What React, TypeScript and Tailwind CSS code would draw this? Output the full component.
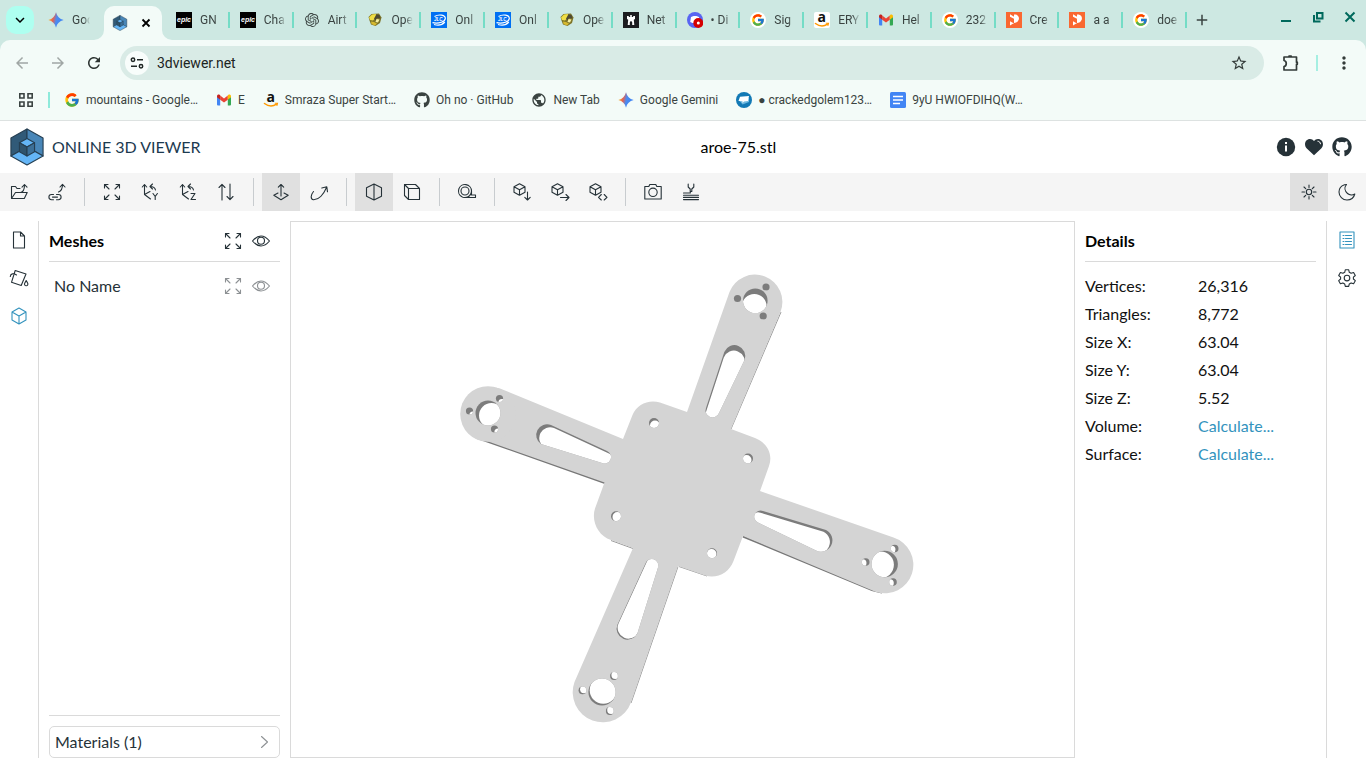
import React, { useId } from "react";
import type { ReactNode } from "react";
import { FcGoogle } from "react-icons/fc";
import { FaGithub } from "react-icons/fa";
import { SiOpenai } from "react-icons/si";
import {
  MdArrowBack,
  MdArrowForward,
  MdRefresh,
  MdStarBorder,
  MdMoreVert,
  MdAdd,
  MdExpandMore,
  MdPublic,
} from "react-icons/md";

/* ---------- favicons ---------- */

function Gemini() {
  const id = useId();
  return (
    <svg viewBox="0 0 16 16" className="size-4 shrink-0" aria-hidden="true">
      <defs>
        <linearGradient id={id} x1="0" y1="0.4" x2="1" y2="0.6">
          <stop offset="0" stopColor="#f6c02d" />
          <stop offset="0.3" stopColor="#e8604f" />
          <stop offset="0.52" stopColor="#4b8bf0" />
          <stop offset="1" stopColor="#3b82f6" />
        </linearGradient>
      </defs>
      <path fill={`url(#${id})`} d="M8 .3C9 4.500 11.500 7 15.700 8 11.500 9 9 11.500 8 15.700 7 11.500 4.500 9 .3 8 4.500 7 7 4.500 8 .3Z" />
    </svg>
  );
}

function ViewerLogo({ className }: { className: string }) {
  return (
    <svg viewBox="0 0 36 40" className={className} aria-hidden="true" stroke="#263f52" strokeWidth="1.200" strokeLinejoin="round">
      <path fill="#315a78" d="M1 10.500 18 1v19L1 29.500Z" />
      <path fill="#4886b8" d="M35 10.500 18 1v19l17 9.500Z" />
      <path fill="#64b5f6" d="M1 29.500 18 20l17 9.500L18 39Z" />
      <path fill="#64b5f6" d="M10 15.500 18 11l8 4.500-8 4.500Z" />
      <path fill="#2f536c" d="M10 15.500 18 20v9.500L10 25Z" />
      <path fill="#3c6f97" d="M26 15.500 18 20v9.500l8-4.500Z" />
    </svg>
  );
}

function Epic() {
  return (
    <svg viewBox="0 0 16 16" className="size-4 shrink-0" aria-hidden="true">
      <rect width="16" height="16" fill="#000" />
      <text x="8" y="10" textAnchor="middle" fill="#fff" fontSize="7" fontWeight="700" fontStyle="italic" fontFamily="Liberation Sans">epic</text>
    </svg>
  );
}

function Opening() {
  return (
    <svg viewBox="0 0 16 16" className="size-4 shrink-0" aria-hidden="true">
      <path fill="#7d7428" d="m1.500 5 3-3L12 1.500l2.500 4L13 11l-4.500 3L4 12.500 2.500 8.500Z" />
      <path fill="#f0de45" d="M2 5.500 5 2.500l4-.500-.5 4L6 8.500 3 8Z" />
      <path fill="#4f4a33" d="m9.500 2.500 3 .5 1 3.500-3.500-.5-1.500 2.500-1.500-2Z" />
      <path fill="#f8f0a0" d="m9.500 7 3 .5-1.500 3-2.500-.5Z" />
      <path fill="#d6b92e" d="m4 9.500 3 .5 3 1.500-2 2-3.500-1.500Z" />
    </svg>
  );
}

function Jlc() {
  return (
    <svg viewBox="0 0 16 16" className="size-4 shrink-0" aria-hidden="true">
      <rect width="16" height="16" fill="#0070f3" />
      <path fill="none" stroke="#fff" strokeWidth="1.200" d="M3.500 4.500C8 1.800 14.500 3 14.300 6.500c-.2 3-6 5.500-12.800 4.200M3 12.500c4.500 1.200 8.500.3 10.800-2.500" />
      <text x="7.300" y="9" textAnchor="middle" fill="#fff" fontSize="4.500" fontWeight="700" fontStyle="italic" fontFamily="Liberation Sans">JLC</text>
    </svg>
  );
}

function Rook() {
  return (
    <svg viewBox="0 0 16 16" className="size-4 shrink-0" aria-hidden="true">
      <rect width="16" height="16" fill="#1c1d20" />
      <path fill="#fff" d="M4 4h1.800v1h1.400V3h1.600v2h1.400V4H12v3l-1.200.7.5 5.300H9.200v-2.500a1.200 1.200 0 0 0-2.400 0V13H4.700l.5-5.300L4 7Z" />
    </svg>
  );
}

function Discord() {
  return (
    <svg viewBox="0 0 16 16" className="size-4 shrink-0" aria-hidden="true">
      <circle cx="8" cy="8" r="8" fill="#5865f2" />
      <path fill="#fff" d="M4 5c2-1.500 6-1.500 8 0l.8 5-2.300 1H5.500l-2.300-1Z" />
      <circle cx="11.300" cy="11" r="5" fill="#d50000" />
      <circle cx="11.300" cy="11" r="1.500" fill="#fff" />
    </svg>
  );
}

function GoogleTile() {
  return (
    <span className="flex size-4 shrink-0 items-center justify-center rounded-full bg-white">
      <FcGoogle className="size-3.5" />
    </span>
  );
}

function Amazon({ tile = false }: { tile?: boolean }) {
  return (
    <svg viewBox="0 0 16 16" className="size-4 shrink-0" aria-hidden="true">
      {tile && <rect width="16" height="16" rx="2" fill="#fff" />}
      <text x="7.800" y="10" textAnchor="middle" fill="#111" fontSize="14" fontWeight="700" fontFamily="Open Sans">a</text>
      <path fill="none" stroke="#f90" strokeWidth="1.500" strokeLinecap="round" d="M1.500 11.500c4 3 8.500 3 12 .6" />
      <path fill="none" stroke="#f90" strokeWidth="1.100" d="M11.800 11.200h2.700l-.7 2.600" />
    </svg>
  );
}

function Gmail() {
  return (
    <svg viewBox="0 0 16 16" className="size-4 shrink-0" aria-hidden="true">
      <path fill="#4285f4" d="M1 4.500 4.200 7v6.500H2a1 1 0 0 1-1-1Z" />
      <path fill="#34a853" d="M15 4.500 11.800 7v6.500H14a1 1 0 0 0 1-1Z" />
      <path fill="#ea4335" d="M4.200 3.500 8 6.400l3.800-2.900v4.200L8 10.600 4.200 7.700Z" />
      <path fill="#c5221f" d="M1 4.200c0-1.600 1.800-2.100 2.800-1.300l.4.400v4.400L1 5.300Z" />
      <path fill="#fbbc04" d="M15 4.200c0-1.600-1.800-2.100-2.800-1.300l-.4.400v4.400L15 5.300Z" />
    </svg>
  );
}

function Printables() {
  return (
    <svg viewBox="0 0 16 16" className="size-4 shrink-0" aria-hidden="true">
      <rect width="16" height="16" fill="#fa6831" />
      <path fill="#fff" d="M4 2.300 8 4.700V2.500c4-.3 5.500 2.500 4.800 5C12 10 10 11 8 11l-4 2.500V9.300L8 11.500V6.800L4 4.800Z" />
    </svg>
  );
}

function BlueBadge() {
  return (
    <svg viewBox="0 0 16 16" className="size-4 shrink-0" aria-hidden="true">
      <circle cx="8" cy="8" r="8" fill="#1279b5" />
      <path fill="#6db8df" d="m3 8 3.500 4.500L13 10V6Z" />
      <path fill="#fff" d="M4 4.800 13 4l-1 5-4 .5L6.500 11V9.300L2.500 9Z" />
    </svg>
  );
}

function Docs() {
  return (
    <svg viewBox="0 0 16 16" className="size-4 shrink-0" aria-hidden="true">
      <rect width="16" height="16" rx="1.500" fill="#4285f4" />
      <path stroke="#fff" strokeWidth="1.500" d="M3 4.500h10M3 8h10M3 11.500h7" />
    </svg>
  );
}

/* ---------- line icons ---------- */

const shapes: Record<string, ReactNode> = {
  open: <path d="M2.500 15.500h11.800l2.900-6H5.500l-4 6V3.500h4l1.500 2h3M5.500 9.500h5c2.500-.5 4-2.500 4-7.500M12 4.200 14.500 1.500 17 4.200" />,
  link: <path d="M5.500 11.500h-2a2.600 2.600 0 0 0 0 5.200h2M8.500 11.500h2a2.600 2.600 0 0 1 0 5.200h-2M4.500 14.100h5M10.500 9c3-1 4-3.500 4-7.500M12 4l2.500-2.700L17 4" />,
  fit: <path d="M1.500 5V1.500H5M1.500 1.500 6 6M13 1.500h3.500V5M16.500 1.500 12 6M1.500 13v3.500H5M1.500 16.500 6 12M13 16.500h3.500V13M16.500 16.500 12 12" />,
  upY: (
    <>
      <path d="M3.500 1.500v10l6 4.500M3.500 11.500l5.500-3M1.300 4 3.500 1.500 5.700 4M9 3.500c3 0 5 1 5.500 3.500M11.500 1 9 3.500 11.500 6" />
      <path d="m12 10.500 2.200 3 2.200-3M14.200 13.500v3" />
    </>
  ),
  upZ: (
    <>
      <path d="M3.500 1.500v10l6 4.500M3.500 11.500l5.500-3M1.300 4 3.500 1.500 5.700 4M9 3.500c3 0 5 1 5.500 3.500M11.500 1 9 3.500 11.500 6" />
      <path d="M12 10.500h4l-4 6h4.500" />
    </>
  ),
  flip: <path d="M5 17V1.500M2 4.500l3-3.200 3 3.200M13 1v15.500M10 13.500l3 3.200 3-3.200" />,
  fixed: <path d="M6 10 1.800 12.300 9 16.700l7.200-4.400L12 10M9 13V1.500M6.300 4.200 9 1.500l2.700 2.700" />,
  free: <path d="M3.500 8.500C.5 12 .3 16.500 3.500 16.800 8.500 17 13.500 11.500 16.500 4.500M11.800 5l5-1.200.7 5" />,
  perspective: <path d="M9 1v16M9 1 1.500 4.800v8.400L9 17M9 1l7.500 3.800v8.400L9 17" />,
  ortho: <path d="M5.500 5.500h11v11h-11ZM5.500 5.500l-4-4M1.500 1.500h11l4 4M1.500 1.500v11l4 4" />,
  measure: (
    <>
      <circle cx="7" cy="8" r="4" />
      <path d="M13.500 12V8A6.500 6.500 0 1 0 4 13.800c.6.500 1.400.7 2 .7h11.500v-2.500ZM7 14.500c3.500 0 6.500-2.500 6.500-6.500" />
    </>
  ),
  download: <path d="M6.500.8 12 3.800v5.400l-5.500 3L1 9.200V3.800ZM1 3.800l5.500 3 5.500-3M6.500 6.800v5.400M14.500 9v8M11.800 14.300l2.700 2.700 2.700-2.700" />,
  export: <path d="M6.500.8 12 3.800v5.400l-5.500 3L1 9.200V3.800ZM1 3.800l5.500 3 5.500-3M6.500 6.800v5.400M9.500 14.500h8M15 11.500l3 3-3 3" />,
  embed: <path d="M6.500.8 12 3.800v5.400l-5.500 3L1 9.200V3.800ZM1 3.800l5.500 3 5.500-3M6.500 6.800v5.400M12.300 11.500 9.500 14.300l2.800 2.700M15.200 11.500l2.800 2.800-2.800 2.700" />,
  camera: (
    <>
      <path d="M.8 3.500h4l1-2h6l1 2h4.400v12.500H.8Z" />
      <circle cx="9" cy="9.300" r="4.200" />
    </>
  ),
  print: <path d="M6.200 1v3l2 2v2.500h1.600V6l2-2V1M1.500 10h6.800v-1.500M1.500 12.200h15M1.500 14.400h15M1.500 16.600h15" />,
  sun: (
    <>
      <circle cx="9" cy="9" r="2.700" />
      <path d="M9 2v2.500M9 13.500V16M2 9h2.500M13.500 9H16M4 4l1.700 1.700M12.300 12.300 14 14M4 14l1.700-1.700M12.300 5.700 14 4" />
    </>
  ),
  moon: <path d="M6.500 1.800C3 3 1 5.700 1 9a8 8 0 0 0 8 8c3.500 0 6.800-2.200 7.800-6-2 1.300-5.300 1.200-7.300-.5C6.800 8.200 6 4.500 8.500 1.500Z" />,
  file: <path d="M3.500 1h7l4 4v12h-11ZM10.500 1v4h4" />,
  material: (
    <>
      <path d="M5.200 1.500 16 5l-4.800 11.500-9.700-3.200L5.200 1.500M.3 7.500C.5 4.500 3.500 4 6.500 6" />
      <path d="m16.200 11.500-1.500 2.800a1.700 1.700 0 1 0 3 0Z" />
    </>
  ),
  cube: <path d="M9 1 16 5v8l-7 4-7-4V5ZM2 5l7 4 7-4M9 9v8" />,
  eye: (
    <>
      <path d="M.5 9C4 4.800 6.500 4 9 4s5 .8 8.500 5c-3.500 4.200-6 5-8.500 5S4 13.200.5 9Z" />
      <circle cx="9" cy="8.800" r="3.500" />
    </>
  ),
  details: <path d="M2 1h14v16H2ZM5 4.500h1M7.500 4.500h6M5 7.500h1M7.500 7.500h6M5 10.500h1M7.500 10.500h6M5 13.500h1M7.500 13.500h6" />,
  gear: (
    <>
      <path d="M7.300.8h3.400l.6 2.500 1.800 1 2.500-.8 1.700 3-1.900 1.700v1.800l1.900 1.700-1.700 3-2.500-.8-1.800 1-.6 2.500H7.300l-.6-2.500-1.800-1-2.500.8-1.700-3L2.600 10V8.200L.7 6.500l1.700-3 2.500.8 1.800-1Z" />
      <circle cx="9" cy="9.100" r="2.800" />
    </>
  ),
  chevron: <path d="m6.500 3.500 6 5.500-6 5.500" />,
};

function Line({ name }: { name: string }) {
  return (
    <svg viewBox="0 0 18 18" className="size-[18px] shrink-0 overflow-visible" fill="none" stroke="currentColor" strokeWidth="1.100" strokeLinejoin="round" strokeLinecap="round" aria-hidden="true">
      {shapes[name]}
    </svg>
  );
}

/* ---------- browser frame ---------- */

const tabs: { icon: ReactNode; label: string }[] = [
  { icon: <Epic />, label: "GN" },
  { icon: <Epic />, label: "Cha" },
  { icon: <SiOpenai className="size-4 shrink-0 p-px" />, label: "Airt" },
  { icon: <Opening />, label: "Ope" },
  { icon: <Jlc />, label: "Onl" },
  { icon: <Jlc />, label: "Onl" },
  { icon: <Opening />, label: "Ope" },
  { icon: <Rook />, label: "Net" },
  { icon: <Discord />, label: "• Di" },
  { icon: <GoogleTile />, label: "Sig" },
  { icon: <Amazon tile />, label: "ERY" },
  { icon: <Gmail />, label: "Hel" },
  { icon: <GoogleTile />, label: "232" },
  { icon: <Printables />, label: "Cre" },
  { icon: <Printables />, label: "a a" },
  { icon: <GoogleTile />, label: "doe" },
];

const bookmarks: { icon: ReactNode; label: string }[] = [
  { icon: <FcGoogle className="size-4 shrink-0" />, label: "mountains - Google…" },
  { icon: <Gmail />, label: "E" },
  { icon: <Amazon />, label: "Smraza Super Start…" },
  { icon: <FaGithub className="size-4 shrink-0" />, label: "Oh no · GitHub" },
  { icon: <MdPublic className="size-4 shrink-0" />, label: "New Tab" },
  { icon: <Gemini />, label: "Google Gemini" },
  { icon: <BlueBadge />, label: "● crackedgolem123…" },
  { icon: <Docs />, label: "9yU HWIOFDIHQ(W…" },
];

const fade = "min-w-0 flex-1 whitespace-nowrap text-left [mask-image:linear-gradient(to_right,black_65%,transparent)]";

function TabStrip() {
  return (
    <div className="flex h-10 bg-[#cde8e2]">
      <button aria-label="Search tabs" className="mt-1.5 ml-1.5 flex size-7 shrink-0 items-center justify-center rounded-[10px] bg-[#aefff0] text-black">
        <MdExpandMore className="size-[18px]" />
      </button>
      <button className="flex w-[60px] shrink-0 items-center gap-2 pr-1 pl-3.5">
        <Gemini />
        <span className={fade}>Goo</span>
      </button>
      <svg viewBox="0 0 10 10" className="size-2.5 shrink-0 self-end" aria-hidden="true"><path fill="#f3fbf8" d="M10 0v10H0A10 10 0 0 0 10 0Z" /></svg>
      <div className="mt-1.5 flex w-[58px] shrink-0 items-center justify-between rounded-t-[10px] bg-[#f3fbf8] px-2">
        <ViewerLogo className="size-4" />
        <button aria-label="Close tab" className="text-black">
          <svg viewBox="0 0 16 16" className="size-4" stroke="currentColor" strokeWidth="1.800"><path d="m4.500 4.500 7 7M11.500 4.500l-7 7" /></svg>
        </button>
      </div>
      <svg viewBox="0 0 10 10" className="-mr-1.5 size-2.5 shrink-0 self-end" aria-hidden="true"><path fill="#f3fbf8" d="M0 0v10h10A10 10 0 0 1 0 0Z" /></svg>
      <div className="flex max-w-[1021px] flex-1">
        {tabs.map((t, i) => (
          <button key={i} className="flex min-w-0 flex-1 items-center gap-2 pl-2.5">
            {t.icon}
            <span className="flex min-w-0 flex-1 items-center">
              <span className={fade}>{t.label}</span>
              <span className="ml-1.5 h-4 w-0.5 shrink-0 bg-[#74dcc6]" />
            </span>
          </button>
        ))}
      </div>
      <button aria-label="New tab" className="ml-1.5 flex w-[18px] items-center justify-center">
        <MdAdd className="size-[18px] shrink-0" />
      </button>
      <div className="ml-auto flex h-[34px] items-center gap-4 pr-2 text-[#00695c]">
        <button aria-label="Minimize">
          <svg viewBox="0 0 16 16" className="size-4" stroke="currentColor" strokeWidth="2"><path d="M3 12h10" /></svg>
        </button>
        <button aria-label="Restore">
          <svg viewBox="0 0 16 16" className="size-4" fill="none" stroke="currentColor" strokeWidth="2"><path d="M7 4h5.500v5.500H7ZM4 6v6.500h6.500" /></svg>
        </button>
        <button aria-label="Close window">
          <svg viewBox="0 0 16 16" className="size-4" stroke="currentColor" strokeWidth="2"><path d="m3.500 3.500 9 9M12.500 3.500l-9 9" /></svg>
        </button>
      </div>
    </div>
  );
}

function AddressRow() {
  return (
    <div className="flex h-11 items-center pt-0.5">
      <button aria-label="Back" className="ml-3 flex w-5 justify-center text-[#a0a7a5]"><MdArrowBack className="size-[18px]" /></button>
      <button aria-label="Forward" className="ml-4 flex w-5 justify-center text-[#a0a7a5]"><MdArrowForward className="size-[18px]" /></button>
      <button aria-label="Reload" className="ml-4 flex w-5 justify-center text-[#2c3331]"><MdRefresh className="size-[18px]" /></button>
      <div className="ml-4 flex h-[34px] flex-1 items-center rounded-full bg-[#d9ebe6] pr-4 pl-[5px]">
        <button aria-label="Site information" className="flex size-6 items-center justify-center rounded-full bg-[#f8fdfb] text-[#1f2725]">
          <svg viewBox="0 0 16 16" className="size-4" fill="none" stroke="currentColor" strokeWidth="1.500">
            <circle cx="4" cy="4.700" r="1.700" />
            <path d="M8 4.700h6M2 11.300h6" />
            <circle cx="12" cy="11.300" r="1.700" />
          </svg>
        </button>
        <input aria-label="Address" defaultValue="3dviewer.net" className="ml-2 min-w-0 flex-1 bg-transparent text-sm text-[#1b2422] outline-none" />
        <button aria-label="Bookmark this page" className="text-[#333b39]"><MdStarBorder className="size-[18px]" /></button>
      </div>
      <button aria-label="Extensions" className="ml-4 text-[#333b39]">
        <svg viewBox="0 0 20 20" className="size-5" fill="none" stroke="currentColor" strokeWidth="1.700" strokeLinejoin="round">
          <path d="M4 4h12.500v5.200h.8v2h-.8V17H4v-3.500c3-.5 3-5.500 0-6ZM9 4v-.8h2.200V4" />
        </svg>
      </button>
      <span className="ml-4 h-4 w-0.5 bg-[#a5efe2]" />
      <button aria-label="Menu" className="mr-3 ml-4 text-[#333b39]"><MdMoreVert className="size-5" /></button>
    </div>
  );
}

function BookmarkBar() {
  return (
    <nav aria-label="Bookmarks" className="flex h-9 items-center pb-1 pl-[18px]">
      <button aria-label="All apps">
        <svg viewBox="0 0 16 16" className="size-4" fill="none" stroke="currentColor" strokeWidth="1.600">
          <path d="M1.800 1.800H6V6H1.800ZM10 1.800h4.200V6H10ZM1.800 10H6v4.200H1.800ZM10 10h4.200v4.200H10Z" />
        </svg>
      </button>
      <span className="mr-3.5 ml-3.5 h-4 w-0.5 bg-[#8eeadb]" />
      <div className="flex gap-[18px]">
        {bookmarks.map((b) => (
          <a key={b.label} href="#" className="flex items-center gap-1.5 whitespace-nowrap">
            {b.icon}
            {b.label}
          </a>
        ))}
      </div>
    </nav>
  );
}

/* ---------- viewer ---------- */

function Tool({ name, label, active = false }: { name: string; label: string; active?: boolean }) {
  return (
    <button aria-label={label} className={`flex size-[38px] items-center justify-center ${active ? "bg-[#e0e0e0]" : ""}`}>
      <Line name={name} />
    </button>
  );
}

function Divider() {
  return <span className="mx-2 h-7 w-px bg-[#c8cccf]" />;
}

function ViewerToolbar() {
  return (
    <div role="toolbar" aria-label="Viewer tools" className="flex h-[38px] shrink-0 items-center bg-[#f5f5f5]">
      <Tool name="open" label="Open from your device" />
      <Tool name="link" label="Open from url" />
      <Divider />
      <Tool name="fit" label="Fit model to window" />
      <Tool name="upY" label="Set Y axis as up vector" />
      <Tool name="upZ" label="Set Z axis as up vector" />
      <Tool name="flip" label="Flip up vector" />
      <Divider />
      <Tool name="fixed" label="Fixed up vector" active />
      <Tool name="free" label="Free orbit" />
      <Divider />
      <Tool name="perspective" label="Perspective camera" active />
      <Tool name="ortho" label="Orthographic camera" />
      <Divider />
      <Tool name="measure" label="Measure" />
      <Divider />
      <Tool name="download" label="Download" />
      <Tool name="export" label="Export" />
      <Tool name="embed" label="Share" />
      <Divider />
      <Tool name="camera" label="Create snapshot" />
      <Tool name="print" label="3D print" />
      <div className="ml-auto flex">
        <Tool name="sun" label="Light mode" active />
        <Tool name="moon" label="Dark mode" />
      </div>
    </div>
  );
}

const circle = (cx: number, cy: number, r: number) =>
  `M${cx - r} ${cy}a${r} ${r} 0 1 1 ${2 * r} 0a${r} ${r} 0 1 1 ${-2 * r} 0Z`;

type Cut = { d: string; dx: number; dy: number };

const cuts: Cut[] = [
  { d: circle(488, 413, 12.5), dx: 3.5, dy: 2.5 },
  { d: circle(499.5, 398.5, 3.6), dx: 2.5, dy: 4 },
  { d: circle(469.5, 411, 3.6), dx: 3.5, dy: 4 },
  { d: circle(494.5, 429, 3.6), dx: 3.5, dy: 3 },
  { d: "M551 425 607 451A6.200 6.200 0 0 1 602 463L541 444A10.800 10.800 0 0 1 551 425Z", dx: 3, dy: 3 },
  { d: circle(755.3, 300.7, 12.3), dx: -1, dy: 5.5 },
  { d: circle(766, 287, 3.6), dx: -1, dy: 7 },
  { d: circle(737.5, 298.5, 3.6), dx: -1, dy: 7 },
  { d: circle(763.2, 316, 3.6), dx: -1, dy: 7 },
  { d: "M724.3 352 706 408A6.600 6.600 0 0 0 719 413L744.500 360A10.700 10.700 0 0 0 724.300 352Z", dx: -0.5, dy: 5.5 },
  { d: circle(884.7, 564, 13.2), dx: -4, dy: 0.8 },
  { d: circle(894.7, 548.5, 3.8), dx: -3, dy: 1 },
  { d: circle(865.7, 562, 3.8), dx: -3, dy: 1 },
  { d: circle(893, 582, 3.8), dx: -3, dy: 1 },
  { d: "M763 511 826 530A11 11 0 0 1 816 550.500L758 522.500A6 6 0 0 1 763 511Z", dx: -2.5, dy: 1.8 },
  { d: circle(602, 692, 13.6), dx: 1.3, dy: -1.8 },
  { d: circle(614, 676, 3.9), dx: 1.3, dy: -1 },
  { d: circle(582.5, 690.3, 3.9), dx: 1.5, dy: -1 },
  { d: circle(609.8, 711, 3.9), dx: 1.3, dy: -1 },
  { d: "M645.500 563.500 617.500 624.500A10.700 10.700 0 0 0 637.500 633L658 567.500A6.500 6.500 0 0 0 645.500 563.500Z", dx: 1, dy: -1 },
  { d: circle(654, 423, 5), dx: 1, dy: 2.5 },
  { d: circle(748, 458.5, 5), dx: -1.5, dy: 1.5 },
  { d: circle(616, 516.3, 5), dx: 1.5, dy: 0.7 },
  { d: circle(712, 553.3, 5), dx: -0.5, dy: 0.8 },
];

function Model() {
  const id = useId();
  return (
    <svg viewBox="291 222 783 535" className="size-full" role="img" aria-label="Quadcopter frame model">
      <path fill="none" stroke="#777" strokeWidth="2" d="M476 437.500 605 483M743 536.500 872 590 882 592.500" />
      <path fill="none" stroke="#999" strokeWidth="1" d="M781 312 731 429M678 566.500 631 703M611 540.500l22 8M679 566.500l28 9.500" />
      <path
        fill="#d4d4d4"
        d="M500 388.500 623 439 632.500 415C637 404 649 399 660 402.500L687 412 729.500 292A27.200 27.200 0 1 1 780.500 312L731 429 755 438C768 443 773 455 769 466L760 491 893.500 537.500A28.600 28.600 0 0 1 876 592L743 536 733.500 561C729 573 717 579 705 575.500L678 566 631 702.500A29.500 29.500 0 1 1 574.500 682L633 548 611 540C598 536 591 521 595 508.500L604.500 482.500 477 437.500A27.500 27.500 0 0 1 500 388.500Z"
      />
      <circle cx="488" cy="414" r="27.800" fill="#d4d4d4" />
      {cuts.map((c, i) => (
        <g key={i}>
          <clipPath id={`${id}-${i}`}>
            <path d={c.d} />
          </clipPath>
          <path d={c.d} fill="#7c7c7c" />
          <g clipPath={`url(#${id}-${i})`}>
            <path d={c.d} fill="#fff" transform={`translate(${c.dx} ${c.dy})`} />
          </g>
        </g>
      ))}
    </svg>
  );
}

const details: [string, string][] = [
  ["Vertices:", "26,316"],
  ["Triangles:", "8,772"],
  ["Size X:", "63.04"],
  ["Size Y:", "63.04"],
  ["Size Z:", "5.52"],
];

function SideButton({ name, label, active = false }: { name: string; label: string; active?: boolean }) {
  return (
    <button aria-label={label} className={`flex h-[38px] w-full items-center justify-center ${active ? "text-[#3393bd]" : ""}`}>
      <Line name={name} />
    </button>
  );
}

export default function App() {
  return (
    <div className="flex h-screen min-h-[560px] flex-col overflow-hidden bg-white">
      <div className="shrink-0 border-b border-[#dde2e1] bg-[#cde8e2] font-['Roboto',sans-serif] text-xs text-[#3a4341]">
        <TabStrip />
        <div className="rounded-t-[10px] bg-[#f3fbf8]">
          <AddressRow />
          <BookmarkBar />
        </div>
      </div>

      <div className="flex min-h-0 flex-1 flex-col font-['Lato','Liberation_Sans',sans-serif] text-base text-[#263238]">
        <header className="flex h-[52px] shrink-0 items-center pr-3.5 pl-2.5">
          <a href="#" className="flex items-center gap-2 text-[#1c3a50]">
            <ViewerLogo className="h-[38px] w-[34px]" />
            <span>ONLINE 3D VIEWER</span>
          </a>
          <h1 className="flex-1 text-center text-black">aroe-75.stl</h1>
          <div className="flex gap-2">
            <a href="#" aria-label="Information">
              <svg viewBox="0 0 20 20" className="size-5"><circle cx="10" cy="10" r="9.200" fill="#263238" /><path stroke="#fff" strokeWidth="2" d="M10 5v2M10 8.500v6" /></svg>
            </a>
            <a href="#" aria-label="Donate">
              <svg viewBox="0 0 20 20" className="size-5"><path fill="#263238" d="M10 18.200 2.800 11.500C-.8 7.500 1.500 2 6 2c1.700 0 3 .7 4 2 1-1.300 2.300-2 4-2 4.500 0 6.800 5.500 3.200 9.500Z" /><path fill="none" stroke="#fff" strokeWidth="1" d="M13.500 4.200c1.800 0 3 1.300 3 3" /></svg>
            </a>
            <a href="#" aria-label="GitHub"><FaGithub className="size-5" /></a>
          </div>
        </header>

        <ViewerToolbar />

        <main className="flex min-h-0 flex-1 py-2.5">
          <nav aria-label="Navigator" className="w-[39px] shrink-0 border-r border-[#dadada]">
            <SideButton name="file" label="Files" />
            <SideButton name="material" label="Materials" />
            <SideButton name="cube" label="Meshes" active />
          </nav>

          <section className="flex w-[251px] shrink-0 flex-col px-2.5">
            <div className="flex h-[41px] items-center border-b border-[#dadada]">
              <h2 className="flex-1 font-bold text-black">Meshes</h2>
              <div className="flex gap-2.5 pr-2.5">
                <button aria-label="Fit to window"><Line name="fit" /></button>
                <button aria-label="Show or hide all"><Line name="eye" /></button>
              </div>
            </div>
            <div className="mt-2.5 flex h-7 items-center pl-[5px]">
              <span className="flex-1">No Name</span>
              <div className="flex gap-2.5 pr-2.5 text-[#8d9194]">
                <button aria-label="Fit mesh to window"><Line name="fit" /></button>
                <button aria-label="Show or hide mesh"><Line name="eye" /></button>
              </div>
            </div>
            <div className="mt-auto border-t border-[#dadada] pt-2.5">
              <button className="flex h-8 w-full items-center justify-between rounded-[5px] border border-[#dadada] pr-1.5 pl-[5px]">
                Materials (1)
                <span className="text-[#8d9194]"><Line name="chevron" /></span>
              </button>
            </div>
          </section>

          <section aria-label="Model" className="min-w-0 flex-1 border border-[#dadada]">
            <Model />
          </section>

          <section className="w-[251px] shrink-0 px-2.5">
            <h2 className="flex h-[41px] items-center border-b border-[#dadada] font-bold text-black">Details</h2>
            <table className="mt-2.5 w-full text-left text-[#111]">
              <tbody>
                {details.map(([k, v]) => (
                  <tr key={k} className="h-7">
                    <th scope="row" className="w-[113px] font-normal">{k}</th>
                    <td>{v}</td>
                  </tr>
                ))}
                {["Volume:", "Surface:"].map((k) => (
                  <tr key={k} className="h-7">
                    <th scope="row" className="w-[113px] font-normal">{k}</th>
                    <td><button className="text-[#3393bd]">Calculate...</button></td>
                  </tr>
                ))}
              </tbody>
            </table>
          </section>

          <nav aria-label="Sidebar" className="w-10 shrink-0 border-l border-[#dadada]">
            <SideButton name="details" label="Details" active />
            <SideButton name="gear" label="Settings" />
          </nav>
        </main>
      </div>
    </div>
  );
}
